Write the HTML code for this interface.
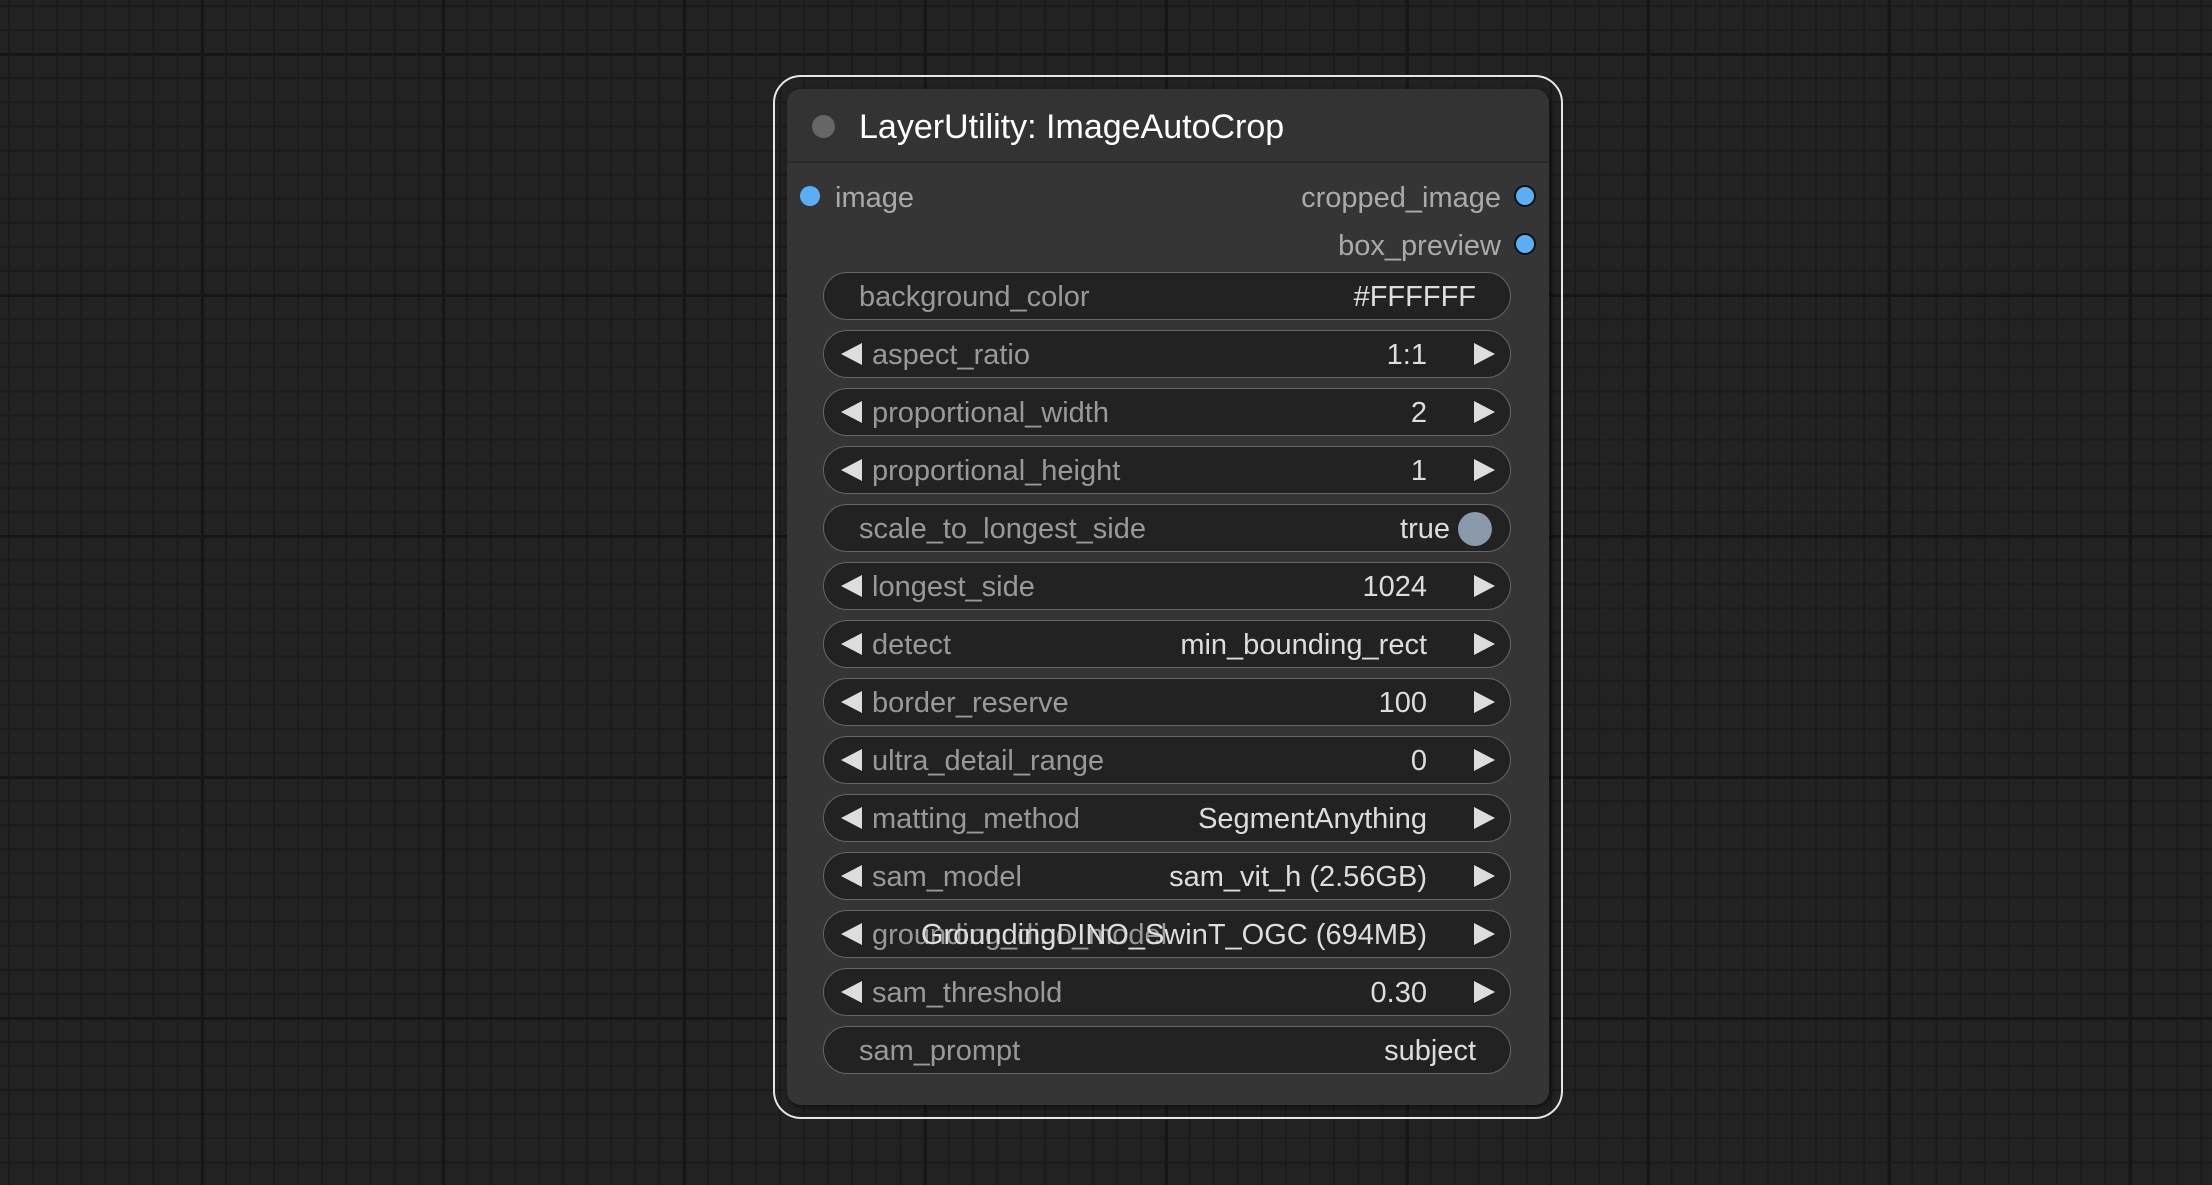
<!DOCTYPE html>
<html><head><meta charset="utf-8"><style>
html,body{margin:0;padding:0;}
body{width:2212px;height:1185px;overflow:hidden;position:relative;font-family:"Liberation Sans",sans-serif;
background-color:#222;
background-image:
linear-gradient(90deg,#161616 0,#161616 3px,transparent 3px),
linear-gradient(180deg,#161616 0,#161616 3px,transparent 3px),
linear-gradient(90deg,#1b1b1b 0,#1b1b1b 2px,transparent 2px),
linear-gradient(180deg,#1b1b1b 0,#1b1b1b 2px,transparent 2px);
background-size:241px 241px,241px 241px,24.1px 24.1px,24.1px 24.1px;
background-position:201px 0,0 53px,8px 0,0 5px;}
.outer{position:absolute;left:773px;top:75px;width:786px;height:1040px;border:2px solid #e6e6e6;border-radius:28px;}
.node{position:absolute;left:787px;top:89px;width:762px;height:1016px;background:#353535;border-radius:14px;box-shadow:2px 3px 6px rgba(0,0,0,.5);}
.tbar{position:absolute;left:787px;top:89px;width:762px;height:72px;background:#333;border-radius:14px 14px 0 0;border-bottom:2px solid #2b2b2b;}
.t{position:absolute;white-space:nowrap;line-height:1;}
.dot{position:absolute;border-radius:50%;}
.w{position:absolute;left:823px;width:686px;height:46px;background:#222;border:1.5px solid #666;border-radius:25px;}
.lab{position:absolute;font-size:29px;color:#999;top:8px;white-space:nowrap;}
.val{position:absolute;font-size:29px;color:#ddd;top:8px;white-space:nowrap;}
.la{position:absolute;left:17px;top:12px;width:0;height:0;border-top:11px solid transparent;border-bottom:11px solid transparent;border-right:21px solid #ddd;}
.ra{position:absolute;right:15px;top:12px;width:0;height:0;border-top:11px solid transparent;border-bottom:11px solid transparent;border-left:21px solid #ddd;}
</style></head><body>
<div class="outer"></div>
<div class="node"></div>
<div class="tbar"></div>
<div class="dot" style="left:812px;top:115px;width:23px;height:23px;background:#666"></div>
<div class="t" style="left:859px;top:110px;font-size:34px;color:#fff">LayerUtility: ImageAutoCrop</div>

<div class="dot" style="left:800px;top:186px;width:20px;height:20px;background:#5aaef5"></div>
<div class="t" style="left:835px;top:184px;font-size:29px;color:#aaa">image</div>
<div class="t" style="right:711px;top:184px;font-size:29px;color:#aaa">cropped_image</div>
<div class="dot" style="left:1514px;top:185px;width:18px;height:18px;background:#5aaef5;border:2px solid #111"></div>
<div class="t" style="right:711px;top:232px;font-size:29px;color:#aaa">box_preview</div>
<div class="dot" style="left:1514px;top:233px;width:18px;height:18px;background:#5aaef5;border:2px solid #111"></div>

<div class="w" style="top:272px"><span class="lab" style="left:35px">background_color</span><span class="val" style="right:34px">#FFFFFF</span></div>
<div class="w" style="top:330px"><i class="la"></i><span class="lab" style="left:48px">aspect_ratio</span><span class="val" style="right:83px">1:1</span><i class="ra"></i></div>
<div class="w" style="top:388px"><i class="la"></i><span class="lab" style="left:48px">proportional_width</span><span class="val" style="right:83px">2</span><i class="ra"></i></div>
<div class="w" style="top:446px"><i class="la"></i><span class="lab" style="left:48px">proportional_height</span><span class="val" style="right:83px">1</span><i class="ra"></i></div>
<div class="w" style="top:504px"><span class="lab" style="left:35px">scale_to_longest_side</span><span class="val" style="right:60px">true</span><span class="dot" style="right:18px;top:7px;width:34px;height:34px;background:#8a9aab"></span></div>
<div class="w" style="top:562px"><i class="la"></i><span class="lab" style="left:48px">longest_side</span><span class="val" style="right:83px">1024</span><i class="ra"></i></div>
<div class="w" style="top:620px"><i class="la"></i><span class="lab" style="left:48px">detect</span><span class="val" style="right:83px">min_bounding_rect</span><i class="ra"></i></div>
<div class="w" style="top:678px"><i class="la"></i><span class="lab" style="left:48px">border_reserve</span><span class="val" style="right:83px">100</span><i class="ra"></i></div>
<div class="w" style="top:736px"><i class="la"></i><span class="lab" style="left:48px">ultra_detail_range</span><span class="val" style="right:83px">0</span><i class="ra"></i></div>
<div class="w" style="top:794px"><i class="la"></i><span class="lab" style="left:48px">matting_method</span><span class="val" style="right:83px">SegmentAnything</span><i class="ra"></i></div>
<div class="w" style="top:852px"><i class="la"></i><span class="lab" style="left:48px">sam_model</span><span class="val" style="right:83px">sam_vit_h (2.56GB)</span><i class="ra"></i></div>
<div class="w" style="top:910px"><i class="la"></i><span class="lab" style="left:48px">grounding_dino_model</span><span class="val" style="right:83px">GroundingDINO_SwinT_OGC (694MB)</span><i class="ra"></i></div>
<div class="w" style="top:968px"><i class="la"></i><span class="lab" style="left:48px">sam_threshold</span><span class="val" style="right:83px">0.30</span><i class="ra"></i></div>
<div class="w" style="top:1026px"><span class="lab" style="left:35px">sam_prompt</span><span class="val" style="right:34px">subject</span></div>
</body></html>
